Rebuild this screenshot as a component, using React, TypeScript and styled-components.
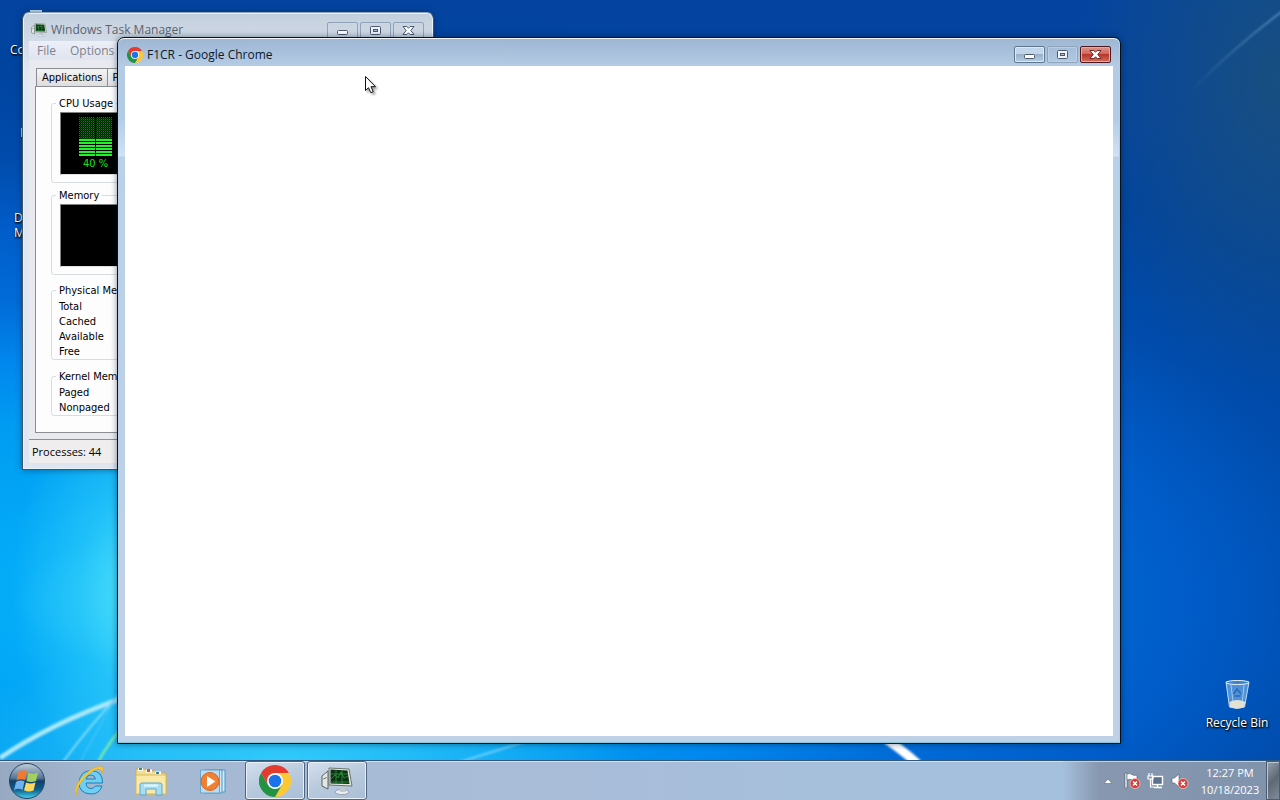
import React from "react";
import styled, { createGlobalStyle, css } from "styled-components";

const GlobalStyle = createGlobalStyle`
  * { box-sizing: border-box; }
  body { margin: 0; font-family: "Open Sans", "Noto Sans", sans-serif; font-size: 12px; }
  button { font: inherit; color: inherit; margin: 0; padding: 0; border: 0; background: none; }
`;

const Desktop = styled.div`
  min-height: 100vh;
  display: flex;
  flex-direction: column;
  position: relative;
  overflow: hidden;
  background:
    radial-gradient(ellipse 28% 16% at 22% 96%, #34ccfa 0%, #34ccfa00 100%),
    radial-gradient(ellipse 10% 26% at 11% 74%, #4ce0fa 0%, #34d0fa90 50%, #34d0fa00 100%),
    radial-gradient(ellipse 16% 40% at 100% 10%, #184f80 0%, #184f8000 100%),
    radial-gradient(
      ellipse 100% 62% at 16% 75%,
      #30ccfa 0%, #20c0fa 7%, #04acf8 15%, #009cf2 38%, #0088ee 50%,
      #006cd8 62%, #005cc8 77%, #004cac 90%, #0044a0 107%, #0444a0 120%
    );
`;

const Wallpaper = styled.svg`
  position: absolute;
  inset: 0;
  width: 100%;
  height: 100%;
`;

const Canvas = styled.main`
  flex: 1;
  position: relative;
`;

const Shortcut = styled.div<{ $x: number; $y: number }>`
  position: absolute;
  left: ${(p) => p.$x}px;
  top: ${(p) => p.$y}px;
  line-height: 15px;
  color: #fff;
  text-shadow: 0 1px 2px #000, 1px 1px 2px #000;
`;

const RecycleBin = styled.div`
  position: absolute;
  right: 6px;
  bottom: 28px;
  width: 74px;
  display: flex;
  flex-direction: column;
  align-items: center;
  gap: 4px;
  line-height: 18px;
  white-space: nowrap;
  color: #fff;
  text-shadow: 0 1px 2px #000, 1px 1px 2px #000;
`;

const TaskWindow = styled.section`
  position: absolute;
  left: 22px;
  top: 12px;
  width: 412px;
  padding: 0 6px 6px;
  border: 1px solid #3f5468;
  border-top-color: #8fa5bd;
  border-radius: 7px 7px 0 0;
  background: linear-gradient(#c4cfdd, #d2dbe7 28px, #dfe7f1 60px, #dfe6f0);
  box-shadow: inset 0 0 0 1px #eaf0f6, 0 0 6px #00204080;
`;

const TitleBar = styled.header`
  display: flex;
  align-items: center;
  gap: 4px;
  height: 28px;
  padding: 6px 3px 0 2px;
  color: #5a6470;
`;

const Title = styled.h1`
  flex: 1;
  margin: 0;
  font-size: 12px;
  font-weight: 400;
  line-height: 16px;
`;

const WindowButtons = styled.div`
  display: flex;
  gap: 2px;
`;

const WindowButton = styled.button<{ $kind: "plain" | "clear" | "close" }>`
  display: grid;
  place-items: center;
  width: 31px;
  height: 17px;
  border-radius: 2px;
  border: 1px solid #91a3b9;
  box-shadow: inset 0 0 0 1px #d0dcea80;
  ${(p) =>
    p.$kind === "plain" &&
    css`
      border-color: #5f7690;
      box-shadow: inset 0 0 0 1px #dceaf8;
      background: linear-gradient(#c3d5e8 50%, #98b1cb 50%, #b4cfe4);
    `}
  ${(p) =>
    p.$kind === "close" &&
    css`
      border-color: #4f1720;
      box-shadow: inset 0 0 0 1px #e8a8a0;
      background: linear-gradient(#dc9488, #cf6458 50%, #b8352a 50%, #d0705c);
    `}
`;

const MenuBar = styled.nav`
  display: flex;
  gap: 14px;
  height: 19px;
  padding-left: 8px;
  align-items: center;
  line-height: 16px;
  color: #7c828c;
  background: linear-gradient(#eceff7, #dfe4f0);
`;

const Client = styled.div`
  padding: 8px 6px 6px;
  background: #e9eaf0;
  font-family: "DejaVu Sans Condensed", "DejaVu Sans", sans-serif;
  font-size: 11px;
  color: #000;
`;

const Tabs = styled.div`
  display: flex;
  padding-left: 1px;
`;

const Tab = styled.button`
  height: 18px;
  padding: 1px 5px 0;
  line-height: 16px;
  border: 1px solid #8b8d92;
  border-bottom: 0;
  background: linear-gradient(#f4f4f4, #dedede);
  & + & { border-left: 0; padding-left: 4px; }
`;

const Panel = styled.div`
  display: grid;
  gap: 8px;
  padding: 9px 15px 16px;
  border: 1px solid #8b8d92;
  background: #fdfdfe;
`;

const Stack = styled.div<{ $gap: number }>`
  display: grid;
  gap: ${(p) => p.$gap}px;
`;

const Group = styled.fieldset<{ $width: number; $graph?: boolean }>`
  width: ${(p) => p.$width}px;
  margin: 0;
  padding: 2px 7px ${(p) => (p.$graph ? 7 : 0)}px 8px;
  border: 1px solid #d8dde0;
  border-radius: 3px;
  line-height: 15px;
`;

const Legend = styled.legend`
  margin-left: -4px;
  padding: 0 3px;
  line-height: 15px;
  height: 14px;
  white-space: nowrap;
`;

const Screen = styled.div`
  display: flex;
  flex-direction: column;
  align-items: center;
  height: 63px;
  padding-top: 4px;
  background: #000;
  border: 1px solid #808080;
  border-right-color: #e0e0e0;
  border-bottom-color: #e0e0e0;
  color: #12e41c;
`;

const List = styled.ul`
  margin: 0 0 0 -1px;
  padding: 0;
  list-style: none;
`;

const StatusBar = styled.footer`
  height: 24px;
  padding-left: 3px;
  border-top: 1px solid #8a8f98;
  font-size: 11px;
  line-height: 24px;
  background: #f0edee;
`;

const BrowserWindow = styled.section`
  position: absolute;
  left: 117px;
  right: 159px;
  top: 37px;
  bottom: 16px;
  display: flex;
  flex-direction: column;
  padding: 0 7px;
  border: 1px solid #06101c;
  border-radius: 7px 7px 0 0;
  background: linear-gradient(#9db6d2, #b4cbe4 28px, #b2cbe6 80px, #cfe2f6 118px, #b9d0e8 119px, #bfd1e6);
  box-shadow: inset 0 1px 0 #f4f8fc, inset -1px 0 0 #8fdcf2, inset 0 -1px 0 #7fc8d8, 0 0 6px #00183080;
`;

const BrowserTitleBar = styled(TitleBar)`
  padding: 5px 2px 0;
  color: #0c1a2c;
`;

const Page = styled.div`
  flex: 1;
  margin-bottom: 7px;
  background: #fff;
`;

const TaskBar = styled.footer`
  position: relative;
  display: flex;
  align-items: stretch;
  height: 40px;
  border-top: 1px solid #33587e;
  box-shadow: inset 0 1px 0 #d3e0ee;
  background: linear-gradient(90deg, #97a9c0, #a5b8d2 100px, #a9bcd8 40%, #a5c0dc 70%, #a4bfdc);
`;

const StartButton = styled.button`
  display: grid;
  place-items: center;
  width: 54px;
`;

const Pinned = styled.nav`
  flex: 1;
  display: flex;
  gap: 2px;
  padding-left: 5px;
`;

const AppButton = styled.button<{ $open?: boolean }>`
  display: grid;
  place-items: center;
  width: 60px;
  height: 39px;
  ${(p) =>
    p.$open &&
    css`
      border: 1px solid #4f647e;
      border-radius: 3px;
      box-shadow: inset 0 0 0 1px #e8f0f8;
      background: linear-gradient(160deg, #d3dfed, #b9cade 50%, #a9bed6);
    `}
`;

const Tray = styled.div`
  display: flex;
  align-items: center;
  gap: 6px;
  padding-left: 36px;
  color: #fff;
  background: linear-gradient(90deg, #8595ad00, #8797af 36px, #8093ad);
  box-shadow: inset 0 1px 0 #c3cedb;
`;

const TrayButton = styled.button`
  display: grid;
  place-items: center;
  width: 18px;
  height: 20px;
`;

const Clock = styled.time`
  width: 60px;
  margin-left: 5px;
  text-align: center;
  font-size: 11px;
  line-height: 17px;
  white-space: nowrap;
`;

const ShowDesktop = styled.button`
  align-self: stretch;
  width: 14px;
  border: 1px solid #4d5b6c;
  box-shadow: inset 1px 1px 0 #b9c5d2;
  background: linear-gradient(135deg, #97a3b2, #5d6875 50%, #7f8c9b);
`;

const Cursor = styled.svg`
  position: absolute;
  left: 364px;
  top: 75px;
  filter: drop-shadow(2px 2px 1px #00000060);
`;

const MinimizeGlyph = () => (
  <svg width="13" height="11" viewBox="0 0 13 11">
    <rect x="1.5" y="5.5" width="10" height="4" rx="1" fill="#fff" stroke="#4c5870" />
  </svg>
);

const MaximizeGlyph = () => (
  <svg width="13" height="11" viewBox="0 0 13 11">
    <rect x="1.5" y="1.5" width="10" height="8" rx="1" fill="#eef3f9" stroke="#4c5870" />
    <rect x="4.5" y="4.5" width="4" height="2" fill="#a9bdd3" stroke="#4c5870" />
  </svg>
);

const CloseGlyph = ({ edge = "#4c5870" }: { edge?: string }) => (
  <svg width="13" height="11" viewBox="0 0 13 11">
    <path
      d="M1 1.500H4.800L6.500 3.200 8.200 1.500H12L8.800 5.500l3.200 4H8.200L6.500 7.800 4.800 9.500H1l3.200-4z"
      fill="#fff"
      stroke={edge}
    />
  </svg>
);

const ChromeLogo = ({ size }: { size: number }) => (
  <svg width={size} height={size} viewBox="0 0 48 48">
    <path d="M24 24V12h20.8A24 24 0 0 1 24 48z" fill="#fcc934" />
    <path d="M3.2 12A24 24 0 0 0 24 48l10.4-18L24 24 13.6 30z" fill="#229342" />
    <path d="M24 12h20.8A24 24 0 0 0 3.2 12L13.6 30 24 24z" fill="#e33b2e" />
    <circle cx="24" cy="24" r="12" fill="#fff" />
    <circle cx="24" cy="24" r="9.5" fill="#1a73e8" />
  </svg>
);

const MonitorIcon = ({ width, height }: { width: number; height: number }) => (
  <svg width={width} height={height} viewBox="0 0 32 28">
    <path d="M1 9l6-5v18l-6-3z" fill="#e4e8e4" stroke="#59625c" />
    <path d="M2.500 12l3-1.500" stroke="#59625c" />
    <ellipse cx="21" cy="25" rx="7" ry="2.600" fill="#e8ecf0" stroke="#828c98" strokeWidth=".7" />
    <path d="M18 19h6l1 6h-6z" fill="#c0c8d0" />
    <path d="M8 1l20 1 3 17-23-1z" fill="#e4e9e1" stroke="#6c756a" />
    <path d="M9.500 2.500l17 1 2 13.500-19-.5z" fill="#0e3216" />
    <path d="M10 12l4-4 3 3 3-6 3 6 4-2M10 7h17M10 15h18M15 3v14M21 3v14" fill="none" stroke="#2f9a3e" strokeWidth=".8" />
  </svg>
);

const CpuMeter = () => (
  <svg width="34" height="39" viewBox="0 0 34 39">
    <defs>
      <pattern id="unlit" width="2" height="2" patternUnits="userSpaceOnUse">
        <rect width="1" height="1" fill="#0c8418" />
        <rect x="1" y="1" width="1" height="1" fill="#06500c" />
      </pattern>
      <pattern id="lit" y="22" width="3" height="3" patternUnits="userSpaceOnUse">
        <rect width="3" height="2" fill="#28ee30" />
      </pattern>
    </defs>
    <rect width="16" height="22" fill="url(#unlit)" />
    <rect x="17" width="16" height="22" fill="url(#unlit)" />
    <rect y="22" width="16" height="17" fill="url(#lit)" />
    <rect x="17" y="22" width="16" height="17" fill="url(#lit)" />
  </svg>
);

const StartOrb = () => (
  <svg width="38" height="38" viewBox="0 0 38 38">
    <defs>
      <linearGradient id="orb" x2="0" y2="1">
        <stop offset="0" stopColor="#c2cfdc" />
        <stop offset=".42" stopColor="#557594" />
        <stop offset=".5" stopColor="#123f6a" />
        <stop offset=".75" stopColor="#0e608e" />
        <stop offset="1" stopColor="#42d4ee" />
      </linearGradient>
    </defs>
    <circle cx="19" cy="19" r="17.500" fill="url(#orb)" stroke="#28435f" />
    <path d="M10.500 10q4.500-3 8.500-.5L17 18q-4.500-2-8.500.3z" fill="#f07a30" />
    <path d="M20.500 10.500q4 2.500 9.500 0L28 19q-4.500 2-9.500 0z" fill="#a2d060" />
    <path d="M8 20q4.500-2.500 8.500-.5l-2 8.500q-4.500-2.500-8.500.3z" fill="#6fb2ec" />
    <path d="M18 20.500q4.500 2 9.500 0l-2 8q-5 2.300-9.500-.2z" fill="#fbd85c" />
  </svg>
);

const ExplorerE = () => (
  <svg width="32" height="32" viewBox="0 0 32 32">
    <path
      d="M29.500 18H13q.4 5.500 5 5.500 3.200 0 4.400-2.500h6.600Q26.500 29 18 29 6 28.500 6 17.500 7 6 18 5.500 30 6 29.500 18zM13 14h9.500q-.6-4-4.700-4T13 14z"
      fill="#70d0f4"
      stroke="#1d7fb8"
    />
    <path d="M3.500 30Q-1 25 8 13.500 19 1 28 1.500q4 1 1 7 .5-4.500-3-4.500-6.500 0-15 9.500Q2.500 23.500 3.500 30z" fill="#f8cd3c" stroke="#d9a520" strokeWidth=".6" />
  </svg>
);

const FolderIcon = () => (
  <svg width="34" height="32" viewBox="0 0 34 32">
    <path d="M2 4h9l2 2h8l2 2h9v21H2z" fill="#f2df8c" stroke="#cda94a" />
    <path d="M4 3h5v3H4zM12 4.500h6v3h-6zM21 6.500h6v3h-6z" fill="#fff" />
    <path d="M5 3h3v2H5z" fill="#3a9a4a" />
    <path d="M13 4h3v3h-3z" fill="#d6553a" />
    <path d="M22 7h3v2h-3z" fill="#2f7fb8" />
    <path d="M2 10h30v19H2z" fill="#f8eaa6" stroke="#d8bb62" />
    <path d="M6 30V20q0-2 2-2h18q2 0 2 2v10h-6v-6H12v6z" fill="#a8dcf2" stroke="#5ea6cc" />
    <path d="M10 20.500h14" stroke="#e6f8ff" strokeWidth="2" />
  </svg>
);

const MediaIcon = () => (
  <svg width="28" height="28" viewBox="0 0 28 28">
    <path d="M8 3h18v22H8z" fill="#d8eaf6" stroke="#4a96c4" />
    <path d="M5 3h18v23H5z" fill="#d0e6f4" stroke="#4a96c4" />
    <path d="M1.500 3h19v23h-19z" fill="#bcdcf2" stroke="#66a6d0" />
    <circle cx="11" cy="14.500" r="9" fill="#f08034" stroke="#d8641a" />
    <path d="M8 9l8.500 5.500L8 20z" fill="#fff" />
  </svg>
);

const BinIcon = () => (
  <svg width="28" height="31" viewBox="0 0 28 31">
    <path d="M3 3l3.500 25q7.500 3 15 0L26 3z" fill="#78b4e8" fillOpacity=".65" stroke="#c4dcee" />
    <path d="M6.500 23q7.500-4 16 0l-1.300 5q-7 2.500-14 0z" fill="#e6e0d0" />
    <ellipse cx="14.500" cy="3.500" rx="11.500" ry="2" fill="#3f81c4" stroke="#eaf4fb" />
    <path d="M8 6l2.500 21M21 6l-2 21" stroke="#d5ebfa" strokeOpacity=".6" />
    <path d="M10.500 15l3.500-5 4 5M17.500 17h-6" fill="none" stroke="#2c67b4" strokeWidth="1.500" />
  </svg>
);

const Alert = () => (
  <g>
    <circle cx="12" cy="11.500" r="5" fill="#d63c34" stroke="#f0c4c0" strokeWidth=".8" />
    <path d="M10 9.500l4 4m0-4l-4 4" stroke="#fff" strokeWidth="1.600" />
  </g>
);

const groups = [
  { name: "Physical Memory (MB)", rows: ["Total", "Cached", "Available", "Free"] },
  { name: "Kernel Memory (MB)", rows: ["Paged", "Nonpaged"] },
];

export default function App() {
  return (
    <Desktop>
      <GlobalStyle />
      <Wallpaper viewBox="0 0 1280 800" preserveAspectRatio="none" aria-hidden="true">
        <defs>
          <filter id="glow" x="-20%" y="-20%" width="140%" height="140%">
            <feGaussianBlur stdDeviation="1" />
          </filter>
          <linearGradient id="ray" x1="0" y1="1" x2="1" y2="0">
            <stop offset="0" stopColor="#6fa0d0" stopOpacity="0" />
            <stop offset="1" stopColor="#6fa0d0" stopOpacity=".7" />
          </linearGradient>
        </defs>
        <g fill="none" filter="url(#glow)">
          <path d="M0 758Q50 724 120 699" stroke="#a8e8fc" strokeWidth="5" />
          <path d="M63 762Q90 725 120 694" stroke="#7cdcfa" strokeWidth="2" />
          <path d="M80 762Q98 730 114 700" stroke="#58c8f6" strokeWidth="1" />
          <path d="M98 762Q108 744 120 730" stroke="#8cf09c" strokeWidth="2" />
          <path d="M460 762L530 740" stroke="#6ccffa" strokeWidth="2" />
          <path d="M880 735Q900 748 918 764" stroke="#fff" strokeWidth="9" />
          <path d="M1190 92Q1235 46 1284 10" stroke="url(#ray)" strokeWidth="2" />
        </g>
        <path d="M30 11h12" stroke="#c8e4f4" strokeWidth="2" />
      </Wallpaper>

      <Canvas>
        <Shortcut $x={10} $y={42}>Co</Shortcut>
        <Shortcut $x={20} $y={125}>F</Shortcut>
        <Shortcut $x={14} $y={210}>
          D<br />M
        </Shortcut>
        <RecycleBin>
          <BinIcon />
          Recycle Bin
        </RecycleBin>

        <TaskWindow>
          <TitleBar>
            <MonitorIcon width={16} height={14} />
            <Title>Windows Task Manager</Title>
            <WindowButtons>
              <WindowButton $kind="clear" aria-label="Minimize"><MinimizeGlyph /></WindowButton>
              <WindowButton $kind="clear" aria-label="Maximize"><MaximizeGlyph /></WindowButton>
              <WindowButton $kind="clear" aria-label="Close"><CloseGlyph /></WindowButton>
            </WindowButtons>
          </TitleBar>
          <MenuBar>
            <button>File</button>
            <button>Options</button>
          </MenuBar>
          <Client>
            <Tabs>
              <Tab>Applications</Tab>
              <Tab>Processes</Tab>
            </Tabs>
            <Panel>
              <Stack $gap={5}>
                <Group $width={88} $graph>
                  <Legend>CPU Usage</Legend>
                  <Screen>
                    <CpuMeter />
                    40 %
                  </Screen>
                </Group>
                <Group $width={88} $graph>
                  <Legend>Memory</Legend>
                  <Screen />
                </Group>
              </Stack>
              <Stack $gap={9}>
                {groups.map((g) => (
                  <Group key={g.name} $width={170}>
                    <Legend>{g.name}</Legend>
                    <List>
                      {g.rows.map((r) => (
                        <li key={r}>{r}</li>
                      ))}
                    </List>
                  </Group>
                ))}
              </Stack>
            </Panel>
          </Client>
          <StatusBar>Processes: 44</StatusBar>
        </TaskWindow>

        <BrowserWindow>
          <BrowserTitleBar>
            <ChromeLogo size={16} />
            <Title>F1CR - Google Chrome</Title>
            <WindowButtons>
              <WindowButton $kind="plain" aria-label="Minimize"><MinimizeGlyph /></WindowButton>
              <WindowButton $kind="clear" aria-label="Maximize"><MaximizeGlyph /></WindowButton>
              <WindowButton $kind="close" aria-label="Close"><CloseGlyph edge="#6b2a2c" /></WindowButton>
            </WindowButtons>
          </BrowserTitleBar>
          <Page />
        </BrowserWindow>

        <Cursor width="14" height="20" viewBox="0 0 14 20">
          <path d="M1.500 1.500v14l3-2.800 2.300 5 2.400-1-2.200-5h4.500z" fill="#fff" stroke="#111" />
        </Cursor>
      </Canvas>

      <TaskBar>
        <StartButton aria-label="Start"><StartOrb /></StartButton>
        <Pinned>
          <AppButton aria-label="Internet Explorer"><ExplorerE /></AppButton>
          <AppButton aria-label="File Explorer"><FolderIcon /></AppButton>
          <AppButton aria-label="Media Player"><MediaIcon /></AppButton>
          <AppButton $open aria-label="Google Chrome"><ChromeLogo size={32} /></AppButton>
          <AppButton $open aria-label="Task Manager"><MonitorIcon width={32} height={28} /></AppButton>
        </Pinned>
        <Tray>
          <TrayButton aria-label="Show hidden icons">
            <svg width="10" height="6" viewBox="0 0 10 6">
              <path d="M1 5.500l4-4.500 4 4.500z" fill="#fff" stroke="#5c6a7c" strokeWidth=".6" />
            </svg>
          </TrayButton>
          <TrayButton aria-label="Action Center">
            <svg width="18" height="18" viewBox="0 0 18 18">
              <path d="M2 1h2v15H2z" fill="#fff" stroke="#4b596b" strokeWidth=".6" />
              <path d="M4 2q3-1 5 .5t5 .5v6q-3 .5-5-1T4 8z" fill="#fff" stroke="#4b596b" strokeWidth=".6" />
              <Alert />
            </svg>
          </TrayButton>
          <TrayButton aria-label="Network">
            <svg width="18" height="18" viewBox="0 0 18 18">
              <rect x="5.500" y="4.500" width="10" height="8" fill="#5c7390" stroke="#fff" strokeWidth="1.400" />
              <path d="M7 15.500h8M10.500 13v2" stroke="#fff" strokeWidth="1.400" />
              <path d="M2 1v3M5 1v3M1 4h5v3H1zM3.500 7v8H7" fill="none" stroke="#fff" strokeWidth="1.200" />
            </svg>
          </TrayButton>
          <TrayButton aria-label="Volume">
            <svg width="18" height="18" viewBox="0 0 18 18">
              <path d="M1 6h2.500L8 2v13l-4.500-4H1z" fill="#fff" stroke="#4b596b" strokeWidth=".6" />
              <Alert />
            </svg>
          </TrayButton>
          <Clock>
            12:27 PM
            <br />
            10/18/2023
          </Clock>
          <ShowDesktop aria-label="Show desktop" />
        </Tray>
      </TaskBar>
    </Desktop>
  );
}
